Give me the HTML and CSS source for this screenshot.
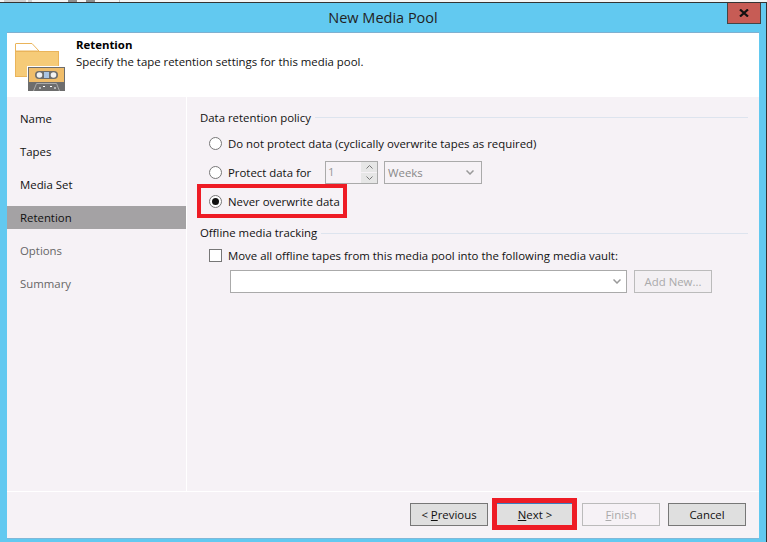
FILE: index.html
```html
<!DOCTYPE html>
<html lang="en">
<head>
<meta charset="utf-8">
<title>New Media Pool</title>
<link rel="stylesheet" href="styles.css">
</head>
<body>
<div class="topstrip"></div>
<div class="window">
  <div class="titlebar">
    <div class="title">New Media Pool</div>
    <div class="close"><svg width="10" height="8" viewBox="0 0 10 8"><path d="M1 0.5 L9 7.5 M9 0.5 L1 7.5" stroke="#111" stroke-width="2.2" fill="none"/></svg></div>
  </div>
  <div class="client">
    <header class="header">
      <svg class="hicon" width="50" height="48" viewBox="0 0 50 48">
        <path d="M0.5 8 V1 a.5 .5 0 0 1 .5 -.5 H17 L24 8 Z" fill="#fff" stroke="#eab45a"/>
        <rect x="0.5" y="8.5" width="43" height="25" fill="#f6cb78" stroke="#eab45a"/>
        <rect x="12" y="23" width="38" height="25" fill="#fff"/>
        <rect x="13" y="24" width="37" height="24" fill="#6d6d6d"/>
        <rect x="14" y="25" width="35" height="14" fill="#f0bd6a"/>
        <rect x="20" y="28" width="23" height="8" rx="4" fill="#6d6d6d"/>
        <circle cx="24.5" cy="32" r="2.8" fill="#f2f2f2"/>
        <circle cx="38.5" cy="32" r="2.8" fill="#f2f2f2"/>
        <rect x="29" y="29" width="5" height="6" fill="#a9c4e4"/>
        <path d="M18.5 48 L21.5 40.5 H41.5 L44.5 48" fill="none" stroke="#aaa" stroke-width="1"/>
        <path d="M24 45 h2 M28 43.5 h2 M35 43.5 h2 M39 45 h2" fill="none" stroke="#fff" stroke-width="1"/>
      </svg>
      <div class="htext">
        <div class="htitle">Retention</div>
        <div class="hsub">Specify the tape retention settings for this media pool.</div>
      </div>
    </header>
    <div class="middle">
      <nav class="nav">
        <div class="step">Name</div>
        <div class="step">Tapes</div>
        <div class="step">Media Set</div>
        <div class="step current">Retention</div>
        <div class="step off">Options</div>
        <div class="step off">Summary</div>
      </nav>
      <main class="main">
        <div class="group"><span>Data retention policy</span><i class="rule"></i></div>
        <div class="row r1"><span class="radio"></span><span>Do not protect data (cyclically overwrite tapes as required)</span></div>
        <div class="row r2">
          <span class="radio"></span><span class="plabel">Protect data for</span>
          <div class="spin"><span class="spinval">1</span><div class="spinbtns">
            <b><svg width="7" height="4" viewBox="0 0 7 4"><path d="M0.5 3.5 L3.5 0.5 L6.5 3.5" fill="none" stroke="#777"/></svg></b>
            <b><svg width="7" height="4" viewBox="0 0 7 4"><path d="M0.5 0.5 L3.5 3.5 L6.5 0.5" fill="none" stroke="#777"/></svg></b>
          </div></div>
          <div class="combo weeks"><span>Weeks</span><svg width="8" height="5" viewBox="0 0 8 5"><path d="M0.5 0.5 L4 4 L7.5 0.5" fill="none" stroke="#999" stroke-width="1.5"/></svg></div>
        </div>
        <div class="row r3"><span class="radio on"></span><span>Never overwrite data</span></div>
        <div class="group g2"><span>Offline media tracking</span><i class="rule"></i></div>
        <div class="row r4"><span class="check"></span><span>Move all offline tapes from this media pool into the following media vault:</span></div>
        <div class="row r5">
          <div class="combo vault"><svg width="8" height="5" viewBox="0 0 8 5"><path d="M0.5 0.5 L4 4 L7.5 0.5" fill="none" stroke="#999" stroke-width="1.5"/></svg></div>
          <div class="btn addnew"><span>Add New...</span></div>
        </div>
      </main>
    </div>
    <footer class="footer">
      <div class="btn"><span>&lt; <u>P</u>revious</span></div>
      <div class="btn next"><span><u>N</u>ext &gt;</span></div>
      <div class="btn finish"><span><u>F</u>inish</span></div>
      <div class="btn"><span>Cancel</span></div>
    </footer>
  </div>
</div>
</body>
</html>
```
FILE: styles.css
```css
* { box-sizing: border-box; }
html, body { margin: 0; padding: 0; }
body {
  width: 767px; height: 542px; overflow: hidden; background: #62c9f0;
  font-family: "Open Sans", "Liberation Sans", sans-serif; font-size: 11.4px; color: #111;
  display: flex; flex-direction: column;
}
.topstrip {
  height: 2px; flex: none;
  background: linear-gradient(90deg, #f4f4f4 0 4px, #cfcfcf 4px 26px, #f4f4f4 26px 28px, #cfcfcf 28px 32px, #f4f4f4 32px 68px, #8f8f8f 68px 77px, #f4f4f4 77px 86px, #8f8f8f 86px 95px, #f4f4f4 95px 119px, #c4c4c4 119px 120px, #f4f4f4 120px);
}
.window { flex: 1; border-top: 1px solid #333; border-right: 1px solid #333; padding-left: 7px; padding-right: 7px; display: flex; flex-direction: column; min-height: 0; }
.titlebar { height: 29px; flex: none; position: relative; display: flex; align-items: center; justify-content: center; }
.title { font-size: 14.5px; color: #222; }
.close { position: absolute; right: -2px; top: 0; width: 34px; height: 21px; background: #c75c55; border: 1px solid #444; border-top: 0; display: flex; align-items: center; justify-content: center; }
.client { flex: 1; margin-bottom: 4px; background: #f6f2f6; display: flex; flex-direction: column; min-height: 0; border-top: 1px solid #7fb0d0; box-shadow: 0 1px 0 #7fb8d8; }
.header { height: 64px; flex: none; background: #fff; display: flex; padding-left: 8px; padding-top: 10px; }
.hicon { flex: none; }
.htext { margin-left: 11px; margin-top: -7px; }
.htitle { font-weight: 700; line-height: 17px; color: #000; }
.hsub { line-height: 17px; color: #111; }
.middle { flex: 1; display: flex; min-height: 0; border-bottom: 1px solid #fff; }
.nav { width: 180px; flex: none; border-right: 1px solid #fff; padding-top: 10px; }
.step { height: 23px; margin-bottom: 10px; padding-left: 13px; line-height: 23px; color: #111; }
.step.current { background: #a4a2a4; }
.step.off { color: #666; }
.main { flex: 1; padding: 11px 11px 0 13px; }
.group { display: flex; align-items: center; height: 18px; }
.rule { flex: 1; height: 1px; background: #dde4ee; margin-left: 4px; margin-top: 1px; }
.row { display: flex; align-items: center; white-space: nowrap; }
.radio { width: 13px; height: 13px; border-radius: 50%; border: 1px solid #777; background: #fff; flex: none; margin-left: 9px; margin-right: 6px; position: relative; }
.radio.on::after { content: ""; position: absolute; left: 2px; top: 2px; width: 7px; height: 7px; border-radius: 50%; background: #111; }
.r1 { height: 18px; margin-top: 8px; }
.r2 { height: 23px; margin-top: 9px; }
.plabel { width: 97px; }
.spin { width: 53px; height: 23px; border: 1px solid #aaa; display: flex; color: #999; margin-right: 6px; }
.spinval { flex: 1; padding-left: 2px; line-height: 19px; }
.spinbtns { width: 16px; display: flex; flex-direction: column; gap: 1px; }
.spinbtns b { flex: 1; background: #e6e6e6; display: flex; align-items: center; justify-content: center; }
.combo { border: 1px solid #aaa; display: flex; align-items: center; justify-content: space-between; background: #f6f2f6; }
.weeks { width: 98px; height: 23px; padding: 0 7px 0 3px; color: #888; }
.r3 { height: 34px; width: 150px; margin-left: -3px; border: 4px solid #ee1c25; }
.r3 .radio { margin-left: 8px; }
.g2 { margin-top: 5px; }
.g2 .rule { margin-top: 3px; }
.r4 { height: 18px; margin-top: 5px; }
.check { width: 13px; height: 13px; border: 1px solid #777; background: #fff; flex: none; margin-left: 9px; margin-right: 6px; }
.r5 { margin-top: 6px; margin-left: 30px; gap: 7px; height: 23px; }
.vault { width: 397px; height: 23px; background: #fff; justify-content: flex-end; padding-right: 5px; }
.btn { height: 23px; width: 78px; border: 1px solid #777; background: #dfdfdf; display: flex; align-items: center; justify-content: center; color: #111; flex: none; }
.addnew { background: #f3f0f3; border-color: #bbb; color: #aaa; }
.footer { height: 46px; flex: none; display: flex; align-items: flex-start; justify-content: flex-end; padding-top: 11px; padding-right: 13px; gap: 8px; }
.finish { background: #f6f2f6; border-color: #bbb; color: #aaa; }
.next { position: relative; border-color: #3a7fc0; }
.next::after { content: ""; position: absolute; left: -5px; right: -4px; top: -6px; bottom: -5px; border: 5px solid #ee1c25; }
```
